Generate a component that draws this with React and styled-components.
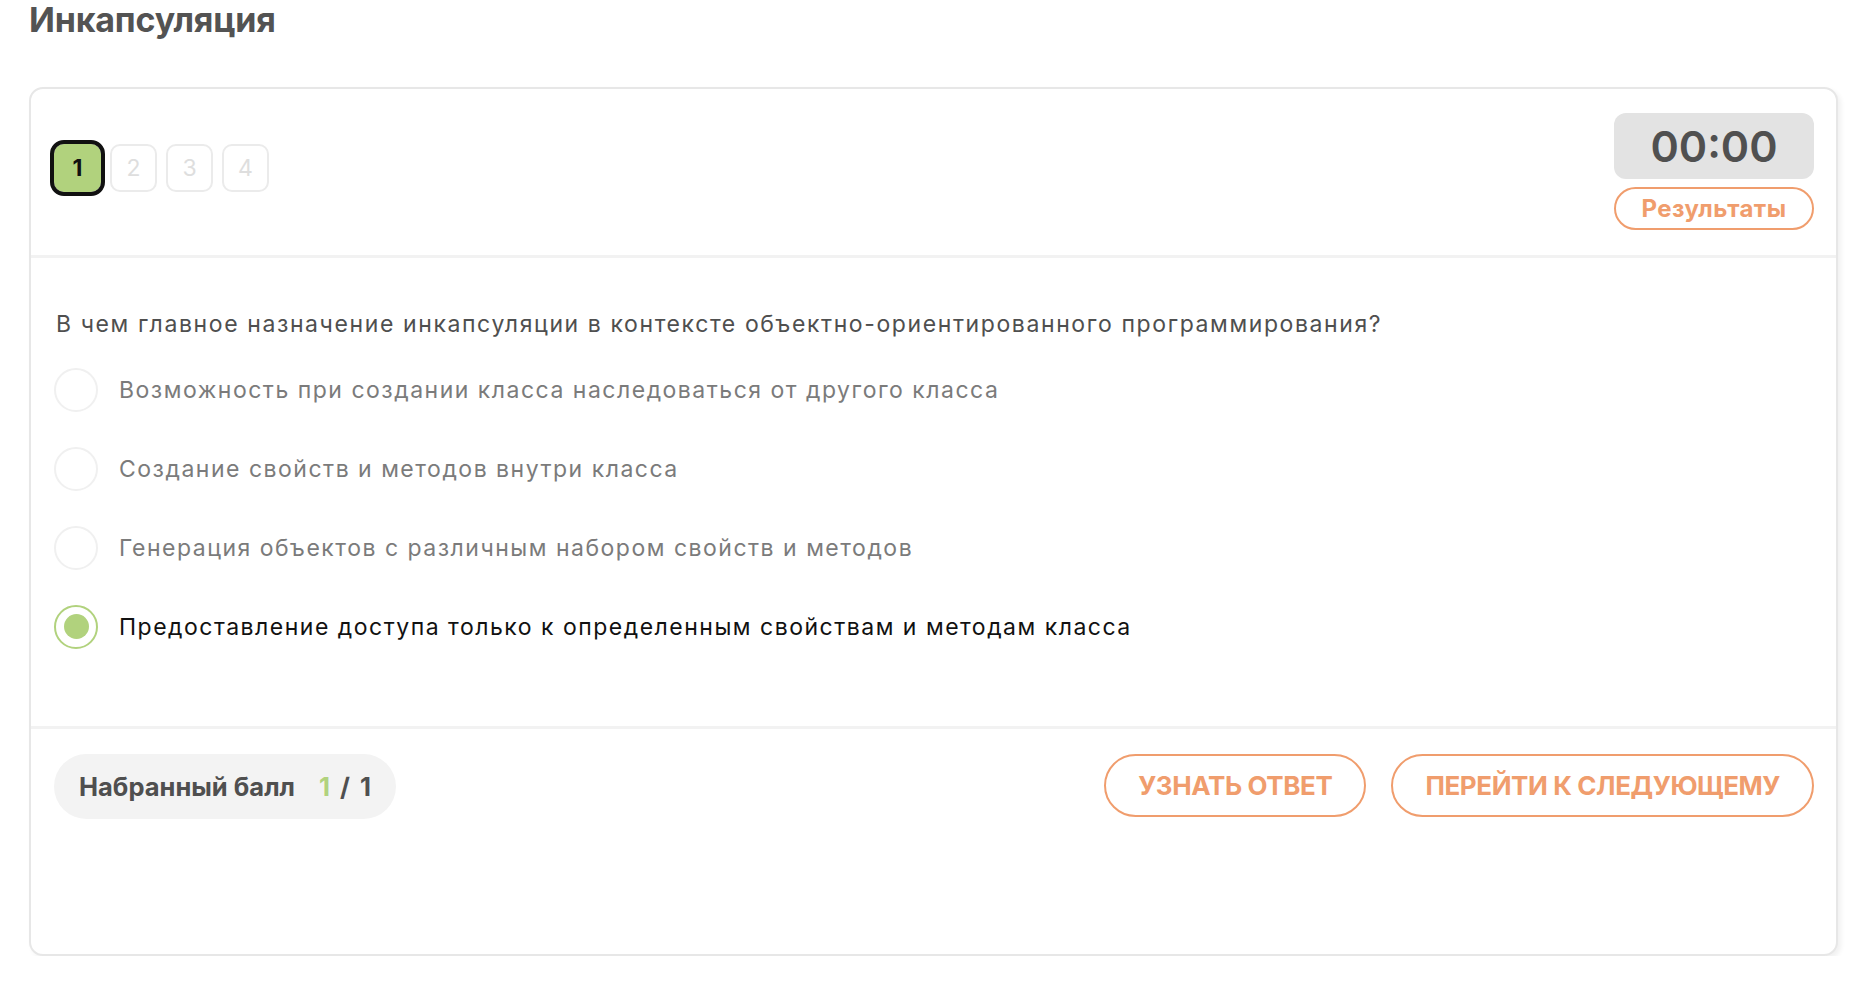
import React, { useState } from 'react';
import styled, { createGlobalStyle } from 'styled-components';

const GlobalStyle = createGlobalStyle`
  body {
    margin: 0;
    background: #fff;
    font-family: Inter, 'Noto Sans', sans-serif;
  }
`;

const colors = {
  text: '#535353',
  muted: '#7b7b7b',
  line: '#f2f2f2',
  border: '#e7e7e7',
  green: '#b1d27d',
  orange: '#f09d6d',
  grey: '#e3e3e3'
};

const question = {
  title: 'Инкапсуляция',
  text: 'В чем главное назначение инкапсуляции в контексте объектно-ориентированного программирования?',
  options: [
    'Возможность при создании класса наследоваться от другого класса',
    'Создание свойств и методов внутри класса',
    'Генерация объектов с различным набором свойств и методов',
    'Предоставление доступа только к определенным свойствам и методам класса'
  ]
};

const App = () => {
  const [selected, setSelected] = useState(3);

  return (
    <Page>
      <GlobalStyle />
      <Title>{question.title}</Title>
      <Card>
        <Header>
          <Steps>
            {[1, 2, 3, 4].map((n) => (
              <Step key={n} active={n === 1}>
                {n}
              </Step>
            ))}
          </Steps>
          <TimerColumn>
            <Timer>00:00</Timer>
            <ResultsButton>Результаты</ResultsButton>
          </TimerColumn>
        </Header>

        <Body>
          <Question>{question.text}</Question>
          <Options>
            {question.options.map((option, i) => (
              <Option key={option} onClick={() => setSelected(i)}>
                <Radio checked={selected === i} />
                <OptionText checked={selected === i}>{option}</OptionText>
              </Option>
            ))}
          </Options>
        </Body>

        <Footer>
          <Score>
            Набранный балл
            <ScoreValue>
              <span>1</span> / 1
            </ScoreValue>
          </Score>
          <Actions>
            <OutlineButton>Узнать ответ</OutlineButton>
            <OutlineButton>Перейти к следующему</OutlineButton>
          </Actions>
        </Footer>
      </Card>
    </Page>
  );
};

export default App;

const Page = styled.div`
  padding: 0 28px 0 29px;
`;

const Title = styled.h1`
  margin: 0 0 46px;
  font-size: 34px;
  line-height: 1.2;
  font-weight: 700;
  letter-spacing: -0.2px;
  color: ${colors.text};
`;

const Card = styled.section`
  height: 869px;
  box-sizing: border-box;
  display: flex;
  flex-direction: column;
  border: 2px solid ${colors.border};
  border-radius: 14px;
  box-shadow: 3px 3px 5px rgba(0, 0, 0, 0.06);
  background: #fff;
`;

const Header = styled.div`
  display: flex;
  align-items: center;
  justify-content: space-between;
  padding: 24px 22px 25px 23px;
  border-bottom: 3px solid ${colors.line};
`;

const Steps = styled.div`
  display: flex;
  gap: 9px;
  margin-bottom: 6px;
`;

const Step = styled.div`
  width: 47px;
  height: 48px;
  box-sizing: border-box;
  display: flex;
  align-items: center;
  justify-content: center;
  border-radius: 10px;
  border: 2px solid ${({ active }) => (active ? colors.green : '#ebebeb')};
  background: ${({ active }) => (active ? colors.green : '#fff')};
  outline: ${({ active }) => (active ? '4px solid #111' : 'none')};
  color: ${({ active }) => (active ? '#111' : '#dedede')};
  font-size: 23px;
  font-weight: ${({ active }) => (active ? 700 : 400)};
`;

const TimerColumn = styled.div`
  display: flex;
  flex-direction: column;
  gap: 8px;
  width: 200px;
`;

const Timer = styled.div`
  height: 66px;
  display: flex;
  align-items: center;
  justify-content: center;
  border-radius: 12px;
  background: ${colors.grey};
  color: #505050;
  font-size: 43px;
  font-weight: 600;
`;

const ResultsButton = styled.button`
  height: 43px;
  border: 2px solid ${colors.orange};
  border-radius: 22px;
  background: #fff;
  color: ${colors.orange};
  font-family: inherit;
  font-size: 24px;
  font-weight: 700;
  letter-spacing: 0.4px;
  cursor: pointer;
`;

const Body = styled.div`
  padding: 52px 23px 77px;
`;

const Question = styled.p`
  margin: 0 0 29px 2px;
  font-size: 23px;
  line-height: 1.25;
  letter-spacing: 1.6px;
  color: #4f4f4f;
`;

const Options = styled.div`
  display: flex;
  flex-direction: column;
  gap: 35px;
`;

const Option = styled.label`
  display: flex;
  align-items: center;
  gap: 21px;
  cursor: pointer;
`;

const Radio = styled.span`
  width: 44px;
  height: 44px;
  box-sizing: border-box;
  flex-shrink: 0;
  display: flex;
  align-items: center;
  justify-content: center;
  border-radius: 50%;
  border: 2px solid ${({ checked }) => (checked ? colors.green : '#f0f0f0')};

  &::after {
    content: '';
    width: 25px;
    height: 25px;
    border-radius: 50%;
    background: ${({ checked }) => (checked ? colors.green : 'transparent')};
  }
`;

const OptionText = styled.span`
  font-size: 23px;
  letter-spacing: 1.5px;
  color: ${({ checked }) => (checked ? '#111' : colors.muted)};
`;

const Footer = styled.div`
  flex: 1;
  display: flex;
  align-items: flex-start;
  justify-content: space-between;
  padding: 25px 22px 0 23px;
  border-top: 3px solid ${colors.line};
`;

const Score = styled.div`
  height: 65px;
  display: flex;
  align-items: center;
  gap: 24px;
  padding: 0 25px;
  border-radius: 33px;
  background: #f3f3f3;
  color: #4f4f4f;
  font-size: 25.5px;
  font-weight: 700;
`;

const ScoreValue = styled.span`
  word-spacing: 4px;

  span {
    color: ${colors.green};
  }
`;

const Actions = styled.div`
  display: flex;
  gap: 25px;
`;

const OutlineButton = styled.button`
  height: 63px;
  padding: 0 32px;
  border: 2px solid ${colors.orange};
  border-radius: 32px;
  background: #fff;
  color: ${colors.orange};
  font-family: inherit;
  font-size: 26px;
  font-weight: 700;
  letter-spacing: -0.4px;
  text-transform: uppercase;
  cursor: pointer;
`;
